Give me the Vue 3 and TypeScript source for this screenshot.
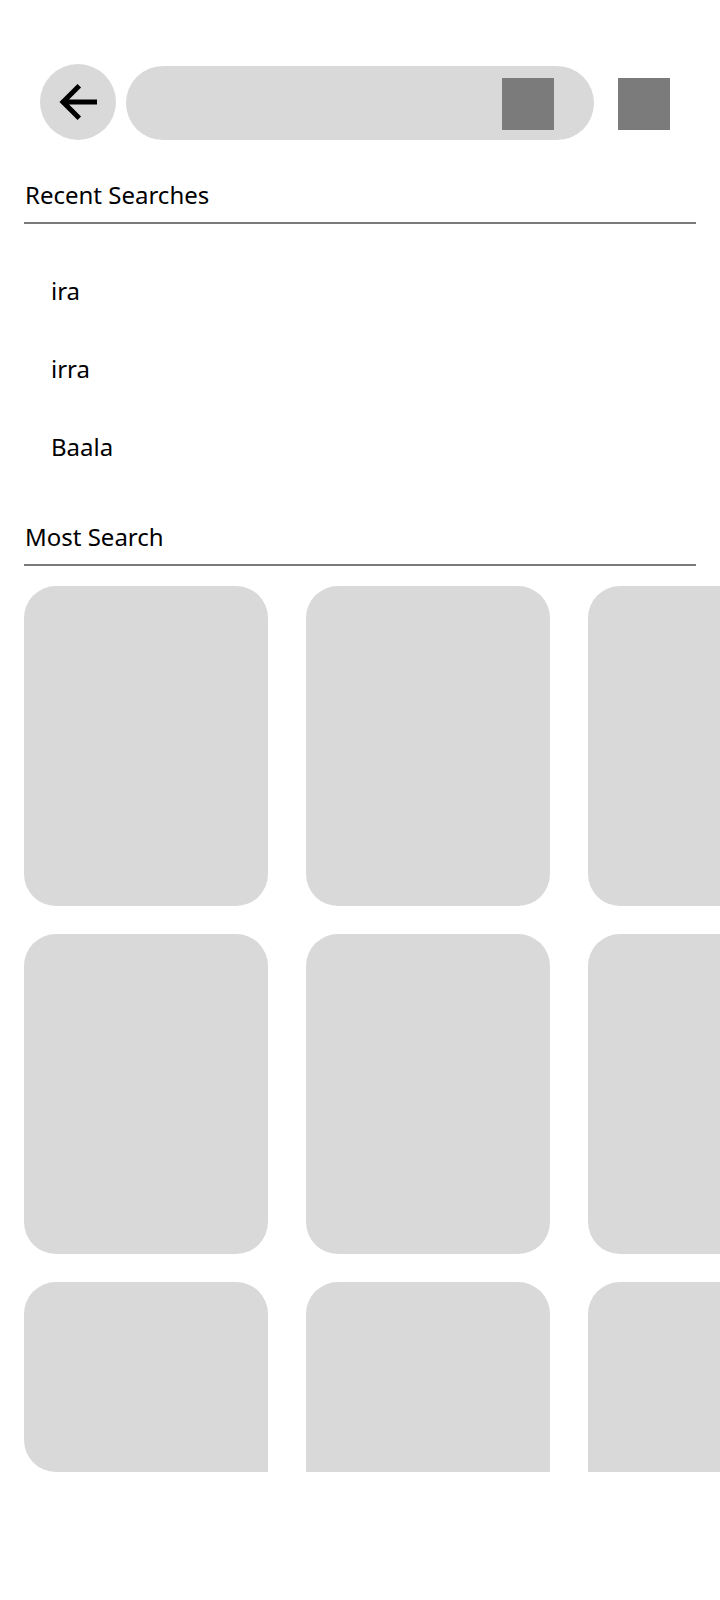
<script setup lang="ts">
import { ref } from 'vue'

interface Card {
  id: number
  cut: boolean
}

const query = ref<string>('')
const recent = ref<string[]>(['ira', 'irra', 'Baala'])
const cards: Card[] = Array.from({ length: 9 }, (_, i) => ({ id: i, cut: i >= 6 }))
</script>

<template>
  <main class="page">
    <header class="bar">
      <button class="back" type="button" aria-label="Back">
        <svg viewBox="0 0 56 56" aria-hidden="true">
          <path d="M29.3 11.7L13 28l16.3 16.3M13 28h34" />
        </svg>
      </button>
      <form class="search" role="search" @submit.prevent>
        <input v-model="query" class="field" type="text" aria-label="Search" />
        <button class="square" type="submit" aria-label="Submit search"></button>
      </form>
      <button class="square menu" type="button" aria-label="Menu"></button>
    </header>

    <section>
      <h2 class="title">Recent Searches</h2>
      <ul class="recent">
        <li v-for="term in recent" :key="term">
          <button class="term" type="button" @click="query = term">{{ term }}</button>
        </li>
      </ul>
    </section>

    <section>
      <h2 class="title">Most Search</h2>
      <ul class="grid">
        <li v-for="card in cards" :key="card.id" class="card" :class="{ cut: card.cut }"></li>
      </ul>
    </section>
  </main>
</template>

<style>
body {
  margin: 0;
  background: #ffffff;
}
</style>

<style scoped>
.page {
  box-sizing: border-box;
  min-height: 100vh;
  padding: 64px 0 128px;
  overflow: hidden;
  color: #000000;
  font-family: 'Noto Sans', sans-serif;
  font-size: 24px;
  line-height: 32px;
}

button,
input {
  margin: 0;
  padding: 0;
  border: 0;
  color: inherit;
  font: inherit;
}

button {
  cursor: pointer;
}

ul {
  margin: 0;
  padding: 0;
  list-style: none;
}

.bar {
  display: flex;
  align-items: flex-end;
  padding: 0 50px 0 40px;
  margin-bottom: 39px;
}

.back {
  display: flex;
  flex: none;
  align-items: center;
  justify-content: center;
  width: 76px;
  height: 76px;
  margin-right: 10px;
  border-radius: 50%;
  background: #d9d9d9;
}

.back svg {
  width: 56px;
  height: 56px;
  fill: none;
  stroke: #000000;
  stroke-width: 5;
}

.search {
  display: flex;
  flex: 1;
  min-width: 0;
  margin-right: 24px;
  padding: 12px 40px 10px 36px;
  border-radius: 37px;
  background: #d9d9d9;
}

.field {
  flex: 1;
  min-width: 0;
  background: transparent;
  outline: none;
}

.square {
  flex: none;
  width: 52px;
  height: 52px;
  background: #7b7b7b;
}

.menu {
  margin-bottom: 10px;
}

.title {
  margin: 0 24px;
  padding: 0 1px 11px;
  border-bottom: 2px solid #7b7b7b;
  font-size: 24px;
  font-weight: 400;
}

.recent {
  padding: 28px 24px 35px;
}

.term {
  display: block;
  width: 100%;
  padding: 23px 27px;
  background: transparent;
  text-align: left;
}

.grid {
  display: grid;
  grid-template-columns: repeat(3, 244px);
  grid-template-rows: 320px 320px 190px;
  gap: 28px 38px;
  padding: 20px 0 0 24px;
}

.card {
  border-radius: 32px;
  background: #d9d9d9;
}

.cut {
  border-radius: 32px 32px 0 0;
}

.cut:nth-child(3n + 1) {
  border-bottom-left-radius: 32px;
}
</style>
